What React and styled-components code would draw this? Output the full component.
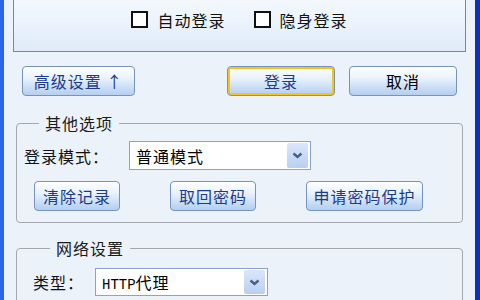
import React from 'react';
import styled, { createGlobalStyle } from 'styled-components';

const GlobalStyle = createGlobalStyle`
  body {
    margin: 0;
    background: #ebf2fa;
    font-family: "Noto Sans CJK SC", "Liberation Sans", sans-serif;
  }
`;

const Window = styled.div`
  width: 480px;
  height: 300px;
  box-sizing: border-box;
  overflow: hidden;
  background: #ebf2fa;
  border-left: 4px solid #2a66e6;
  border-right: 5px solid #0b2fbf;
  position: relative;
  &::before {
    content: '';
    position: absolute;
    left: -4px;
    top: 0;
    bottom: 0;
    width: 2px;
    background: #0a3ccd;
  }
`;

const TopPanel = styled.div`
  margin: 0 9px;
  height: 52px;
  border: 1px solid #5f8ad8;
  border-top: none;
  background: linear-gradient(#f4f8fd, #e8f1fb 60%, #dfeaf8);
  display: flex;
  align-items: center;
  justify-content: center;
  gap: 28px;
  padding-bottom: 12px;
  box-sizing: border-box;
`;

const Check = styled.label`
  display: flex;
  align-items: center;
  gap: 9px;
  font-size: 16px;
  letter-spacing: 1px;
  color: #111;
`;

const Box = styled.span`
  flex-shrink: 0;
  width: 13px;
  height: 13px;
  border: 2px solid #111;
  background: #fff;
`;

const ButtonRow = styled.div`
  display: flex;
  justify-content: space-between;
  padding: 0 18px;
  margin-top: 14px;
`;

const Pair = styled.div`
  display: flex;
  gap: 14px;
`;

const Button = styled.button`
  width: ${p => p.$w}px;
  height: 30px;
  padding: 0;
  box-sizing: border-box;
  border: 1px solid #7593bd;
  border-radius: 4px;
  background: linear-gradient(#fdfeff 0%, #e9f2fc 40%, #c4daf4 80%, #b6cff0 100%);
  color: ${p => (p.$plain ? '#000' : '#1c3b8e')};
  font-family: "Noto Sans CJK SC", sans-serif;
  font-size: 16px;
  letter-spacing: 1px;
  line-height: 28px;
  box-shadow: ${p => (p.$focused ? 'inset 0 0 0 2px #f5c51c' : 'inset 0 1px 0 #fff')};
`;

const Group = styled.fieldset`
  margin: ${p => p.$top}px 12px 0;
  padding: ${p => p.$pt}px 0 11px ${p => p.$pl}px;
  border: 1px solid #a3a8ad;
  border-radius: 4px;
  min-width: 0;
`;

const Legend = styled.legend`
  margin-left: ${p => p.$ml}px;
  padding: 0 6px;
  font-size: 16px;
  line-height: 18px;
  letter-spacing: 1px;
  color: #1a1a1a;
`;

const FieldRow = styled.div`
  display: flex;
  align-items: center;
`;

const Label = styled.span`
  width: ${p => p.$w}px;
  font-size: 16px;
  letter-spacing: 1px;
  color: #111;
`;

const Select = styled.div`
  width: ${p => p.$w}px;
  height: ${p => p.$h}px;
  box-sizing: border-box;
  border: 1px solid #8aa3c8;
  background: #fff;
  display: flex;
  align-items: center;
  justify-content: space-between;
  padding: 0 2px 0 6px;
  font-size: 16px;
  letter-spacing: 1px;
  color: #000;
`;

const Latin = styled.span`
  font-family: "Liberation Mono", monospace;
  font-size: 14px;
  letter-spacing: 0;
`;

const Arrow = styled.span`
  width: 21px;
  height: ${p => p.$h}px;
  border-radius: 2px;
  background: linear-gradient(#dbe6fa, #b9cff3);
  display: flex;
  align-items: center;
  justify-content: center;
`;

const ActionRow = styled.div`
  display: flex;
  justify-content: space-between;
  margin: 11px 39px 0 10px;
`;

const Chevron = () => (
  <svg width="11" height="7" viewBox="0 0 11 7">
    <path d="M1.5 1.5 L5.5 5 L9.5 1.5" fill="none" stroke="#4a5d82" strokeWidth="2.4" />
  </svg>
);

const Dropdown = ({ w, h, children }) => (
  <Select $w={w} $h={h}>
    <span>{children}</span>
    <Arrow $h={h - 4}>
      <Chevron />
    </Arrow>
  </Select>
);

export default function App() {
  return (
    <>
      <GlobalStyle />
      <Window>
        <TopPanel>
          <Check><Box />自动登录</Check>
          <Check><Box />隐身登录</Check>
        </TopPanel>

        <ButtonRow>
          <Button $w={113}>高级设置 ↑</Button>
          <Pair>
            <Button $w={108} $focused>登录</Button>
            <Button $w={108} $plain>取消</Button>
          </Pair>
        </ButtonRow>

        <Group $top={18} $pt={9} $pl={7}>
          <Legend $ml={15}>其他选项</Legend>
          <FieldRow>
            <Label $w={105}>登录模式：</Label>
            <Dropdown w={182} h={29}>普通模式</Dropdown>
          </FieldRow>
          <ActionRow>
            <Button $w={86}>清除记录</Button>
            <Button $w={86}>取回密码</Button>
            <Button $w={117}>申请密码保护</Button>
          </ActionRow>
        </Group>

        <Group $top={16} $pt={11} $pl={16}>
          <Legend $ml={17}>网络设置</Legend>
          <FieldRow>
            <Label $w={62}>类型：</Label>
            <Dropdown w={173} h={28}><Latin>HTTP</Latin>代理</Dropdown>
          </FieldRow>
        </Group>
      </Window>
    </>
  );
}
